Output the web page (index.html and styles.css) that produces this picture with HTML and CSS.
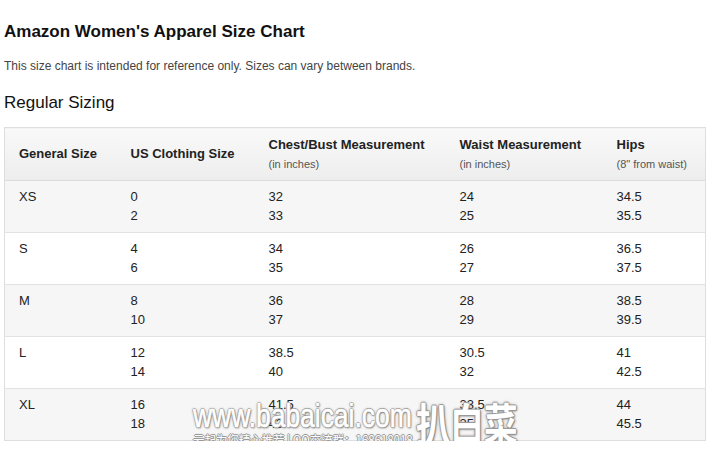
FILE: index.html
```html
<!DOCTYPE html>
<html>
<head>
<meta charset="utf-8">
<link rel="stylesheet" href="styles.css">
</head>
<body>
<div class="page">
  <h1 class="title">Amazon Women's Apparel Size Chart</h1>
  <p class="note">This size chart is intended for reference only. Sizes can vary between brands.</p>
  <h2 class="section">Regular Sizing</h2>
  <table class="chart">
    <colgroup>
      <col class="c1"><col class="c2"><col class="c3"><col class="c4"><col class="c5">
    </colgroup>
    <thead>
      <tr>
        <th>General Size</th>
        <th>US Clothing Size</th>
        <th>Chest/Bust Measurement<span class="sub">(in inches)</span></th>
        <th>Waist Measurement<span class="sub">(in inches)</span></th>
        <th>Hips<span class="sub">(8" from waist)</span></th>
      </tr>
    </thead>
    <tbody>
      <tr class="alt"><td>XS</td><td>0<br>2</td><td>32<br>33</td><td>24<br>25</td><td>34.5<br>35.5</td></tr>
      <tr><td>S</td><td>4<br>6</td><td>34<br>35</td><td>26<br>27</td><td>36.5<br>37.5</td></tr>
      <tr class="alt"><td>M</td><td>8<br>10</td><td>36<br>37</td><td>28<br>29</td><td>38.5<br>39.5</td></tr>
      <tr><td>L</td><td>12<br>14</td><td>38.5<br>40</td><td>30.5<br>32</td><td>41<br>42.5</td></tr>
      <tr class="alt"><td>XL</td><td>16<br>18</td><td>41.5<br>43</td><td>33.5<br>35</td><td>44<br>45.5</td></tr>
    </tbody>
  </table>
  <div class="watermark">
    <span class="wm-url">www.babaicai.com</span>
    <span class="wm-sub">云起为您精心推荐 | QQ交流群：168618018</span>
    <span class="wm-cn">扒白菜</span>
  </div>
</div>
</body>
</html>
```
FILE: styles.css
```css
html, body {
  margin: 0;
  padding: 0;
  background: #fff;
}
body {
  font-family: "Liberation Sans", Arial, sans-serif;
  color: #111;
}
.page {
  position: relative;
  padding: 21px 4px 0 4px;
}
.title {
  margin: 0;
  font-size: 17px;
  line-height: 22px;
  font-weight: bold;
  color: #111;
}
.note {
  margin: 15px 0 0 0;
  font-size: 12px;
  line-height: 16px;
  color: #444;
}
.section {
  margin: 18px 0 0 0;
  font-size: 17px;
  line-height: 22px;
  font-weight: normal;
  color: #111;
}
.chart {
  margin-top: 13px;
  width: 701px;
  border-collapse: collapse;
  table-layout: fixed;
  border: 1px solid #dedede;
  font-size: 13px;
}
.c1 { width: 112px; }
.c2 { width: 138px; }
.c3 { width: 191px; }
.c4 { width: 157px; }
.c5 { width: 103px; }
.chart th {
  text-align: left;
  font-weight: bold;
  font-size: 13px;
  color: #222;
  padding: 0 0 0 14px;
  height: 52px;
  vertical-align: middle;
  line-height: 18px;
  background: linear-gradient(#f9f9f9, #ededed);
  border-bottom: 1px solid #dcdcdc;
}
.sub {
  display: block;
  margin-top: 2px;
  font-weight: normal;
  font-size: 11px;
  line-height: 16px;
  color: #555;
}
.chart td {
  padding: 6px 0 7px 14px;
  line-height: 19px;
  vertical-align: top;
  color: #222;
  border-top: 1px solid #e2e2e2;
}
.chart tr.alt td {
  background: #f6f6f6;
}
.watermark {
  position: absolute;
  left: 193px;
  top: 400px;
  width: 330px;
  height: 50px;
  color: #fff;
  pointer-events: none;
}
.wm-url,
.wm-sub,
.wm-cn {
  position: absolute;
  white-space: nowrap;
  transform-origin: 0 0;
}
.wm-url {
  left: 0;
  top: 0;
  font-family: "Liberation Sans", Arial, sans-serif;
  font-size: 33px;
  line-height: 32px;
  transform: scaleX(0.8);
  -webkit-text-stroke: 0.6px #fff;
  text-shadow: 1px 0 0 #999, -1px 0 0 #999, 0 1px 0 #999, 0 -1px 0 #999, 1px 1px 2px #666, 0 0 3px #888;
}
.wm-sub {
  left: 0;
  top: 32px;
  font-family: "Noto Sans CJK SC", sans-serif;
  font-size: 13px;
  line-height: 15px;
  transform: scaleX(0.88);
  text-shadow: 1px 0 0 #999, -1px 0 0 #999, 0 1px 0 #999, 0 -1px 0 #999, 0 0 2px #777;
}
.wm-cn {
  left: 223px;
  top: 0;
  font-family: "Noto Sans CJK SC", sans-serif;
  font-size: 44px;
  line-height: 44px;
  font-weight: bold;
  transform: scaleX(0.77);
  text-shadow: 1px 0 0 #999, -1px 0 0 #999, 0 1px 0 #999, 0 -1px 0 #999, 1px 1px 2px #666, 0 0 4px #888;
}
```
